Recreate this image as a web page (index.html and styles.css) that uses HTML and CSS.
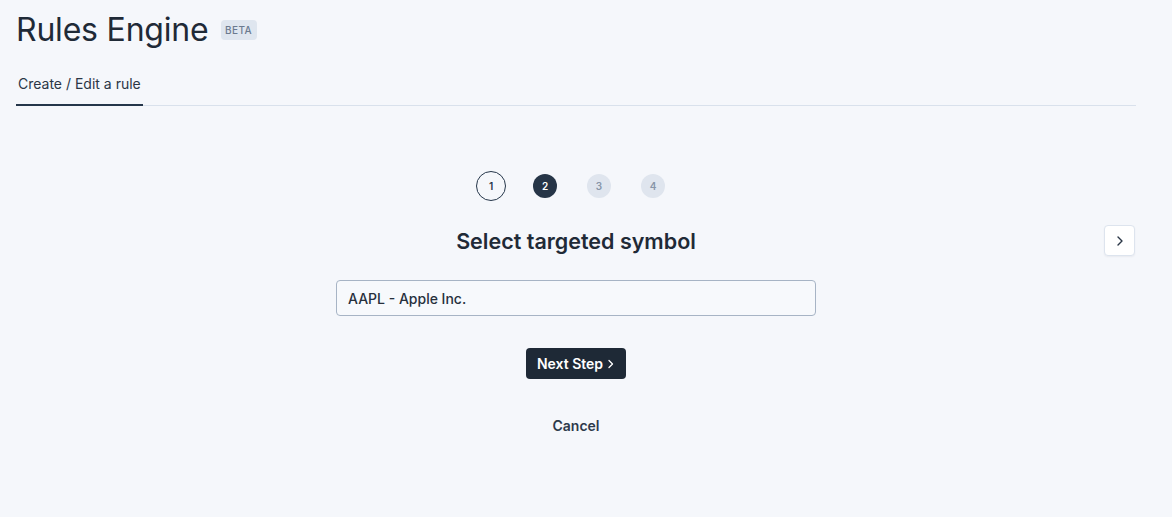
FILE: index.html
```html
<!DOCTYPE html>
<html lang="en">
<head>
<meta charset="utf-8">
<title>Rules Engine</title>
<link rel="stylesheet" href="styles.css">
</head>
<body>
<div class="page">
  <header class="header">
    <h1 class="title">Rules Engine</h1>
    <span class="badge">BETA</span>
  </header>
  <nav class="tabs">
    <span class="tab">Create / Edit a rule</span>
  </nav>
  <main class="wizard">
    <div class="steps">
      <span class="slot"><span class="step step-done">1</span></span>
      <span class="slot"><span class="step step-active">2</span></span>
      <span class="slot"><span class="step step-todo">3</span></span>
      <span class="slot"><span class="step step-todo">4</span></span>
    </div>
    <div class="heading-row">
      <h2 class="heading">Select targeted symbol</h2>
      <button class="nav-btn" type="button" aria-label="Next">
        <svg width="10" height="12" viewBox="0 0 10 12"><path d="M3 2 L7 6 L3 10" fill="none" stroke="#2a3646" stroke-width="1.4" stroke-linecap="round" stroke-linejoin="round"/></svg>
      </button>
    </div>
    <div class="field">AAPL - Apple Inc.</div>
    <button class="primary" type="button">Next Step
      <svg width="8" height="12" viewBox="0 0 8 12"><path d="M2 2.5 L5.5 6 L2 9.5" fill="none" stroke="#ffffff" stroke-width="1.3" stroke-linecap="round" stroke-linejoin="round"/></svg>
    </button>
    <button class="cancel" type="button">Cancel</button>
  </main>
</div>
</body>
</html>
```

FILE: styles.css
```css
* { box-sizing: border-box; }

body {
  margin: 0;
  background: #f5f7fb;
  font-family: Inter, "Noto Sans", sans-serif;
  color: #1f2a37;
}

.page {
  width: 1136px;
  padding: 10px 0 0 16px;
}

.header {
  display: flex;
  align-items: center;
  gap: 12px;
}

.title {
  margin: 0;
  font-size: 32px;
  line-height: 40px;
  font-weight: 400;
  color: #1f2a37;
  letter-spacing: -0.2px;
}

.badge {
  display: inline-flex;
  align-items: center;
  justify-content: center;
  width: 36px;
  height: 20px;
  border-radius: 4px;
  background: #dfe6ef;
  color: #6b7a8f;
  font-size: 10px;
  font-weight: 500;
  letter-spacing: 0.4px;
}

.tabs {
  margin-top: 24px;
  border-bottom: 1px solid #d9e1ec;
  display: flex;
}

.tab {
  display: inline-block;
  padding: 0 2px 10px;
  margin-bottom: -1px;
  border-bottom: 2px solid #25364a;
  font-size: 14px;
  line-height: 20px;
  color: #2b3646;
}

.wizard {
  display: flex;
  flex-direction: column;
  align-items: center;
}

.steps {
  margin-top: 65px;
  display: flex;
  align-items: center;
  gap: 24px;
  padding-right: 8px;
}

.slot {
  width: 30px;
  height: 30px;
  display: flex;
  align-items: center;
  justify-content: center;
}

.step {
  display: flex;
  align-items: center;
  justify-content: center;
  width: 24px;
  height: 24px;
  border-radius: 50%;
  font-size: 10px;
  font-weight: 600;
}

.step-done {
  width: 30px;
  height: 30px;
  border: 1px solid #25364a;
  color: #25364a;
}

.step-active {
  background: #263547;
  color: #ffffff;
}

.step-todo {
  background: #dfe5ee;
  color: #8795a8;
}

.heading-row {
  margin-top: 24px;
  width: 100%;
  display: grid;
  grid-template-columns: 1fr auto 1fr;
  align-items: center;
}

.heading {
  grid-column: 2;
  margin: 0;
  font-size: 21.5px;
  line-height: 28px;
  font-weight: 600;
  color: #1f2a37;
}

.nav-btn {
  grid-column: 3;
  justify-self: end;
  width: 31px;
  height: 31px;
  margin-right: 1px;
  display: flex;
  align-items: center;
  justify-content: center;
  padding: 0;
  background: #ffffff;
  border: 1px solid #dde4ee;
  border-radius: 4px;
  box-shadow: 0 1px 2px rgba(30, 42, 60, 0.06);
}

.field {
  margin-top: 24px;
  width: 480px;
  height: 36px;
  padding: 0 11px;
  display: flex;
  align-items: center;
  border: 1px solid #a7b4c5;
  border-radius: 4px;
  background: #f7f9fc;
  font-size: 14px;
  font-weight: 500;
  color: #27303c;
}

.primary {
  margin-top: 32px;
  height: 31px;
  padding: 0 11px;
  display: flex;
  align-items: center;
  gap: 4px;
  background: #1e2936;
  color: #ffffff;
  border: none;
  border-radius: 4px;
  font-family: inherit;
  font-size: 14px;
  font-weight: 600;
}

.cancel {
  margin-top: 37px;
  background: none;
  border: none;
  padding: 0;
  font-family: inherit;
  font-size: 14px;
  line-height: 20px;
  font-weight: 600;
  color: #2d3a4b;
}
```
